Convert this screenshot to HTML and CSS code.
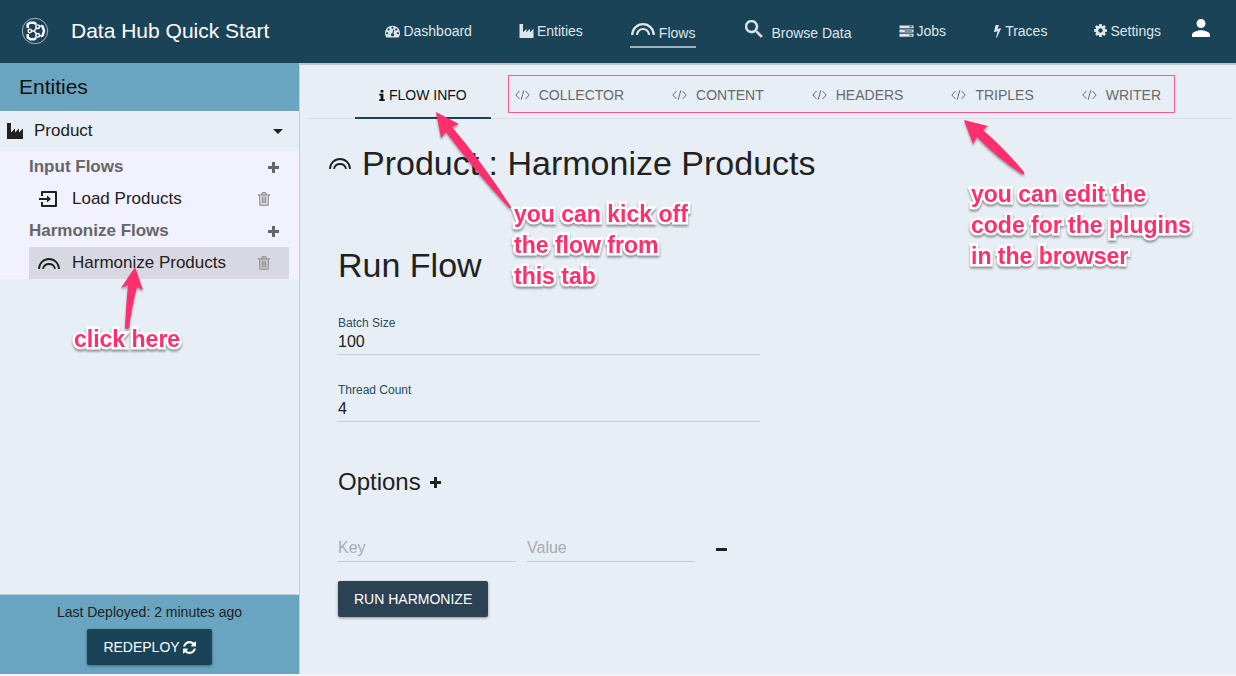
FILE: index.html
```html
<!DOCTYPE html>
<html lang="en">
<head>
<meta charset="utf-8">
<meta name="viewport" content="width=device-width, initial-scale=1">
<title>Data Hub Quick Start</title>
<link rel="stylesheet" href="styles.css">
</head>
<body>
<svg class="sprite" aria-hidden="true">
  <symbol id="i-dashboard" viewBox="0 128 1792 1536"><path d="M384 1152q0-53-37.500-90.500t-90.500-37.500-90.500 37.500-37.500 90.500 37.500 90.500 90.500 37.500 90.500-37.500 37.500-90.500zm192-448q0-53-37.500-90.500t-90.500-37.500-90.500 37.500-37.500 90.500 37.500 90.500 90.500 37.500 90.500-37.500 37.500-90.500zm428 481l101-382q6-26-7.500-48.500t-38.500-29.500-48 6.500-30 39.500l-101 382q-60 5-107 43.500t-63 98.500q-20 77 20 146t117 89 146-20 89-117q16-60-6-117t-72-91zm660-33q0-53-37.500-90.500t-90.500-37.500-90.500 37.500-37.500 90.500 37.500 90.500 90.500 37.500 90.500-37.500 37.500-90.500zm-640-640q0-53-37.500-90.500t-90.500-37.500-90.500 37.500-37.500 90.500 37.500 90.500 90.500 37.500 90.500-37.500 37.500-90.500zm448 192q0-53-37.500-90.500t-90.500-37.500-90.500 37.500-37.500 90.500 37.500 90.500 90.500 37.500 90.500-37.500 37.500-90.500zm320 448q0 261-141 483-19 29-54 29h-1402q-35 0-54-29-141-221-141-483 0-182 71-348t191-286 286-191 348-71 348 71 286 191 191 286 71 348z"/></symbol>
  <symbol id="i-factory" viewBox="0 0 16 16"><path d="M0 0h4v9.500l4-4v4l4-4v4l4-4V16H0z"/></symbol>
  <symbol id="i-rainbow" viewBox="0 0 24 12"><path d="M1.200 12A10.800 10.800 0 0 1 22.800 12M6 12a6 6 0 0 1 12 0" fill="none" stroke="currentColor" stroke-width="2.200"/></symbol>
  <symbol id="i-rainbow-thin" viewBox="0 0 22 12"><path d="M1 12a10 10 0 0 1 20 0M5 12a6.100 6.100 0 0 1 12 0" fill="none" stroke="currentColor" stroke-width="1.800"/></symbol>
  <symbol id="i-search" viewBox="3 3 18 18"><path stroke="currentColor" stroke-width=".6" d="M15.500 14h-.79l-.28-.27A6.470 6.470 0 0 0 16 9.500 6.500 6.500 0 1 0 9.500 16c1.610 0 3.090-.59 4.230-1.570l.27.28v.79l5 4.990L20.490 19l-4.990-5zm-6 0C7.010 14 5 11.990 5 9.500S7.010 5 9.500 5 14 7.010 14 9.500 11.990 14 9.500 14z"/></symbol>
  <symbol id="i-server" viewBox="0 0 16 12"><path fill-rule="evenodd" d="M.5 0h15v3H.5zM11 1v1h3V1zM.5 4.500h15v3H.5zM6 5.500v1h8v-1zM.5 9h15v3H.5zM11 10v1h3v-1z"/></symbol>
  <symbol id="i-bolt" viewBox="448 0 896 1792"><path d="M1333 566q18 20 7 44l-540 1157q-13 25-42 25-4 0-14-2-17-5-25.500-19t-4.500-30l197-808-406 101q-4 1-12 1-18 0-31-11-18-15-13-39l201-825q4-14 16-23t28-9h328q19 0 32 12.500t13 29.500q0 8-5 18l-171 463 396-98q8-2 12-2 19 0 34 15z"/></symbol>
  <symbol id="i-cog" viewBox="128 128 1536 1536"><path d="M1152 896q0-106-75-181t-181-75-181 75-75 181 75 181 181 75 181-75 75-181zm512-109v222q0 12-8 23t-20 13l-185 28q-19 54-39 91 35 50 107 138 10 12 10 25t-9 23q-27 37-99 108t-94 71q-12 0-26-9l-138-108q-44 23-91 38-16 136-29 186-7 28-36 28h-222q-14 0-24.500-8.500t-11.500-21.500l-28-184q-49-16-90-37l-141 107q-10 9-25 9-14 0-25-11-126-114-165-168-7-10-7-23 0-12 8-23 15-21 51-66.500t54-70.500q-27-50-41-99l-183-27q-13-2-21-12.500t-8-23.500v-222q0-12 8-23t19-13l186-28q14-46 39-92-40-57-107-138-10-12-10-24 0-10 9-23 26-36 98.500-107.500t94.500-71.500q13 0 26 10l138 107q44-23 91-38 16-136 29-186 7-28 36-28h222q14 0 24.500 8.500t11.500 21.500l28 184q49 16 90 37l142-107q9-9 24-9 13 0 25 10 129 119 165 170 7 8 7 22 0 12-8 23-15 21-51 66.500t-54 70.500q26 50 41 98l183 28q13 2 21 12.500t8 23.500z"/></symbol>
  <symbol id="i-person" viewBox="4 4 16 16"><path d="M12 12c2.210 0 4-1.790 4-4s-1.790-4-4-4-4 1.790-4 4 1.790 4 4 4zm0 2c-2.670 0-8 1.340-8 4v2h16v-2c0-2.660-5.330-4-8-4z"/></symbol>
  <symbol id="i-input" viewBox="0 0 22 16"><path d="M4 5V1h14v14H4v-4M1 8h9" fill="none" stroke="currentColor" stroke-width="2" stroke-linejoin="round"/><path d="M9 4.500L13 8l-4 3.500z"/></symbol>
  <symbol id="i-plus" viewBox="0 0 11 11"><path d="M4 0h3v4h4v3H7v4H4V7H0V4h4z"/></symbol>
  <symbol id="i-minus" viewBox="0 0 11 11"><rect y="4" width="11" height="3" rx=".6"/></symbol>
  <symbol id="i-trash" viewBox="0 0 12 14"><path d="M0 3h12M3.800 3l.7-2.200h3L8.200 3M1.700 3v9.200q0 1 1 1h6.600q1 0 1-1V3M4.300 4.500v7M6 4.500v7M7.700 4.500v7" fill="none" stroke="currentColor" stroke-width="1.400"/></symbol>
  <symbol id="i-caret" viewBox="0 0 10 5"><path d="M0 0h10L5 5z"/></symbol>
  <symbol id="i-info" viewBox="0 0 6 12"><path d="M1.500 0h3v2.600h-3zM0 4h4.500v6H6v2H0v-2h1.500V6H0z"/></symbol>
  <symbol id="i-code" viewBox="0 0 15 10"><path d="M4.500 1L.8 5l3.700 4M10.500 1l3.700 4-3.700 4M8.800.3L6.200 9.700" fill="none" stroke="currentColor"/></symbol>
  <symbol id="i-refresh" viewBox="128 128 1536 1536"><path d="M1639 1056q0 5-1 7-64 268-268 434.500t-478 166.500q-146 0-282.500-55t-243.500-157l-129 129q-19 19-45 19t-45-19-19-45v-448q0-26 19-45t45-19h448q26 0 45 19t19 45-19 45l-137 137q71 66 161 102t187 36q134 0 250-65t186-179q11-17 53-117 8-23 30-23h192q13 0 22.500 9.500t9.500 22.500zm25-800v448q0 26-19 45t-45 19h-448q-26 0-45-19t-19-45 19-45l138-138q-148-137-349-137-134 0-250 65t-186 179q-11 17-53 117-8 23-30 23h-199q-13 0-22.500-9.500t-9.500-22.500v-7q65-268 270-434.500t480-166.500q146 0 284 55.500t245 156.500l130-129q19-19 45-19t45 19 19 45z"/></symbol>
</svg>

<div class="app">
  <header class="topbar">
    <svg class="logo" viewBox="0 0 28 28" aria-hidden="true">
      <circle cx="14" cy="14" r="12.700" stroke-width=".8" opacity=".75"/>
      <path stroke-width="2.500" stroke-linejoin="round" d="M6.700 11V7.300L9.200 5.700h4l2 1.600M19.500 8.600l2.200 1L23 14l-1.300 4.400-2.200 1M15.200 20.700l-2 1.600h-4l-2.500-2V17"/>
      <path stroke-width="1.500" d="M10.500 14H13M15.500 11.300L13 14l2.500 2.700"/>
      <circle cx="8.800" cy="14" r="1.700" stroke-width="1.400"/>
      <circle cx="16.700" cy="9.700" r="1.800" stroke-width="1.400"/>
      <circle cx="16.700" cy="18.300" r="1.800" stroke-width="1.400"/>
    </svg>
    <span class="brand">Data Hub Quick Start</span>
    <nav class="nav" aria-label="Main">
      <a class="nav-link" href="#"><svg class="ico-15"><use href="#i-dashboard"/></svg>Dashboard</a>
      <a class="nav-link" href="#"><svg class="ico-15"><use href="#i-factory"/></svg>Entities</a>
      <a class="nav-link nav-link--large nav-link--active" href="#" aria-current="page"><svg class="ico-arc"><use href="#i-rainbow"/></svg>Flows</a>
      <a class="nav-link nav-link--large" href="#"><svg class="ico-18"><use href="#i-search"/></svg>Browse Data</a>
      <a class="nav-link" href="#"><svg class="ico-15"><use href="#i-server"/></svg>Jobs</a>
      <a class="nav-link" href="#"><svg class="ico-bolt"><use href="#i-bolt"/></svg>Traces</a>
      <a class="nav-link" href="#"><svg class="ico-13"><use href="#i-cog"/></svg>Settings</a>
    </nav>
    <button class="icon-button user" type="button" aria-label="Account"><svg class="ico-18"><use href="#i-person"/></svg></button>
  </header>

  <aside class="sidebar">
    <h2 class="sidebar-title">Entities</h2>
    <button class="entity" type="button" aria-expanded="true"><svg class="ico-16"><use href="#i-factory"/></svg><span>Product</span><svg class="caret"><use href="#i-caret"/></svg></button>
    <div class="flows">
      <div class="flow-head"><h3>Input Flows</h3><button class="icon-button" type="button" aria-label="Add input flow"><svg class="ico-11"><use href="#i-plus"/></svg></button></div>
      <div class="flow"><a href="#"><svg class="ico-flow"><use href="#i-input"/></svg>Load Products</a><button class="icon-button trash" type="button" aria-label="Delete Load Products"><svg><use href="#i-trash"/></svg></button></div>
      <div class="flow-head"><h3>Harmonize Flows</h3><button class="icon-button" type="button" aria-label="Add harmonize flow"><svg class="ico-11"><use href="#i-plus"/></svg></button></div>
      <div class="flow flow--active"><a href="#"><svg class="ico-title"><use href="#i-rainbow-thin"/></svg>Harmonize Products</a><button class="icon-button trash" type="button" aria-label="Delete Harmonize Products"><svg><use href="#i-trash"/></svg></button></div>
    </div>
    <div class="deploy">
      <p>Last Deployed: 2 minutes ago</p>
      <button class="button" type="button">REDEPLOY <svg class="ico-13"><use href="#i-refresh"/></svg></button>
    </div>
  </aside>

  <main class="main">
    <nav class="tabs" aria-label="Flow sections">
      <a class="tab tab--active" href="#" aria-current="true"><svg class="ico-info"><use href="#i-info"/></svg>FLOW INFO</a>
      <div class="plugin-tabs">
        <a class="tab" href="#"><svg class="ico-code"><use href="#i-code"/></svg>COLLECTOR</a>
        <a class="tab" href="#"><svg class="ico-code"><use href="#i-code"/></svg>CONTENT</a>
        <a class="tab" href="#"><svg class="ico-code"><use href="#i-code"/></svg>HEADERS</a>
        <a class="tab" href="#"><svg class="ico-code"><use href="#i-code"/></svg>TRIPLES</a>
        <a class="tab" href="#"><svg class="ico-code"><use href="#i-code"/></svg>WRITER</a>
      </div>
    </nav>
    <h1 class="page-title"><svg class="ico-title"><use href="#i-rainbow-thin"/></svg>Product : Harmonize Products</h1>
    <form class="run">
      <h2 class="run-title">Run Flow</h2>
      <div class="field"><label for="batch">Batch Size</label><input id="batch" type="text" value="100"></div>
      <div class="field"><label for="threads">Thread Count</label><input id="threads" type="text" value="4"></div>
      <div class="options"><h3>Options</h3><button class="icon-button" type="button" aria-label="Add option"><svg class="ico-11"><use href="#i-plus"/></svg></button></div>
      <div class="pair">
        <input class="pair-key" type="text" placeholder="Key" aria-label="Key">
        <input class="pair-value" type="text" placeholder="Value" aria-label="Value">
        <button class="icon-button" type="button" aria-label="Remove option"><svg class="ico-11"><use href="#i-minus"/></svg></button>
      </div>
      <button class="button button--run" type="button">RUN HARMONIZE</button>
    </form>
  </main>

  <svg class="arrows" width="1236" height="676" aria-hidden="true">
    <path d="M135 267L143 290L137 287Q132 305 129 328Q127 330 125 328Q126 305 128 285L121 288Z"/>
    <path d="M436 112L459 124L452 127Q482 162 511 207Q512 209 509 208Q474 170 446 132L441 138Z"/>
    <path d="M964 120L988 126L983 130Q1004 148 1024 172Q1025 175 1022 174Q997 158 977 137L973 144Z"/>
  </svg>
  <p class="note note--click">click here</p>
  <p class="note note--kick">you can kick off<br>the flow from<br>this tab</p>
  <p class="note note--edit">you can edit the<br>code for the plugins<br>in the browser</p>
</div>
</body>
</html>
```
FILE: styles.css
```css
* { box-sizing: border-box; }

body {
  margin: 0;
  background: #f6f6f6;
  color: #212121;
  font: 14px/20px "Liberation Sans", Arial, sans-serif;
}

h1, h2, h3, p { margin: 0; font-weight: 400; }
a { color: inherit; text-decoration: none; }
svg { fill: currentColor; flex: none; }
button, input { font: inherit; color: inherit; }
.sprite { position: absolute; width: 0; height: 0; }

.app {
  position: relative;
  display: grid;
  grid-template: 63px 1fr / 300px 1fr;
  min-height: calc(100vh - 2px);
  background: #e7eef5;
}

.ico-11 { width: 11px; height: 11px; }
.ico-13 { width: 13px; height: 13px; }
.ico-15 { width: 15px; height: 14px; }
.ico-16 { width: 16px; height: 16px; }
.ico-18 { width: 18px; height: 18px; }
.ico-bolt { width: 9px; height: 14px; }
.ico-arc { width: 24px; height: 12px; }
.ico-info { width: 6px; height: 11px; }
.ico-code { width: 15px; height: 10px; }
.ico-flow { width: 22px; height: 16px; }
.ico-title { width: 22px; height: 12px; }

.icon-button {
  display: flex;
  padding: 0;
  border: 0;
  background: none;
  cursor: pointer;
}

/* Top bar */
.topbar {
  grid-column: 1 / -1;
  display: flex;
  align-items: center;
  padding: 0 26px 2px 21px;
  background: #1b4357;
  color: #fff;
}
.logo { width: 28px; height: 28px; margin-right: 22px; fill: none; stroke: #fff; }
.brand { font-size: 21px; line-height: 24px; }
.nav { display: flex; align-items: center; gap: 47px; margin-left: auto; color: #dfe5e9; }
.nav-link { display: flex; align-items: center; gap: 3px; }
.nav-link--large { gap: 8px; padding: 4px 0 0 2px; }
.nav-link--large svg { margin-bottom: 8px; }
.nav-link--active { padding: 9px 1px 3px; border-bottom: 2px solid #a3b3bb; gap: 4px; }
.user { margin-left: 31px; }
.user svg { margin-bottom: 6px; }

/* Sidebar */
.sidebar {
  display: flex;
  flex-direction: column;
  border-right: 1px solid #c8cdd3;
  font-size: 17px;
}
.sidebar-title {
  padding: 12px 19px;
  background: #69a4c0;
  color: #111;
  font-size: 21px;
  line-height: 24px;
}
.entity {
  display: flex;
  align-items: center;
  gap: 11px;
  height: 40px;
  padding: 0 16px 0 7px;
  border: 0;
  background: none;
  cursor: pointer;
}
.caret { width: 10px; height: 5px; margin-left: auto; }
.flows { padding: 0 10px 0 29px; background: #f2f1ff; }
.flow-head, .flow { display: flex; align-items: center; justify-content: space-between; height: 32px; }
.flow-head { padding-right: 10px; color: #666; }
.flow-head h3 { font-size: 17px; font-weight: 700; }
.flow { padding: 0 19px 0 9px; }
.flow--active { background: #d8d8e2; }
.flow a { display: flex; align-items: center; gap: 12px; }
.trash { color: #999; }
.trash svg { width: 12px; height: 14px; }

.deploy {
  display: flex;
  flex-direction: column;
  align-items: center;
  gap: 7px;
  margin-top: auto;
  padding: 7px 0 9px;
  border-top: 1px solid #c8cdd3;
  background: #69a4c0;
  font-size: 14px;
}
.button {
  display: flex;
  align-items: center;
  gap: 3px;
  height: 36px;
  padding: 0 16px;
  border: 0;
  border-radius: 2px;
  background: #1b4357;
  color: #fff;
  box-shadow: 0 1px 3px rgba(0, 0, 0, .4);
  cursor: pointer;
}

/* Main column */
.main { padding: 6px 4px 24px 8px; border-top: 2px solid #c0c6cc; }
.tabs {
  display: flex;
  justify-content: center;
  box-shadow: inset 0 -1px #dcdfe2;
}
.tab {
  display: flex;
  align-items: center;
  gap: 9px;
  height: 48px;
  padding: 0 24px;
  color: #666a6e;
}
.tab--active {
  gap: 4px;
  padding-top: 2px;
  border-bottom: 2px solid #1b4357;
  color: #111;
}
.plugin-tabs { position: relative; display: flex; }
.plugin-tabs::after {
  content: "";
  position: absolute;
  inset: 4px 10px 6px 17px;
  border: 1px solid #fb5a8b;
  pointer-events: none;
}
.page-title {
  display: flex;
  align-items: center;
  gap: 11px;
  padding: 24px 21px;
  font-size: 34px;
  line-height: 40px;
}
.run { max-width: 452px; padding: 38px 0 0 30px; }
.run-title { font-size: 34px; line-height: 40px; }
.field {
  display: flex;
  flex-direction: column;
  margin-top: 27px;
}
.field label { color: #2b4b60; font-size: 12px; line-height: 16px; }
.run-title + .field { margin-top: 30px; }
.run input {
  min-width: 0;
  height: 24px;
  padding: 0 0 2px;
  border: 0;
  border-bottom: 1px solid #c6ccd6;
  background: none;
  font-size: 16px;
  outline: 0;
}
.run input::placeholder { color: #a9acb0; opacity: 1; }
.options { display: flex; align-items: center; gap: 9px; margin-top: 44px; }
.options h3 { font-size: 24px; line-height: 32px; }
.pair { display: flex; align-items: center; margin-top: 38px; }
.run .pair input { height: 26px; }
.pair-key { flex: 178; margin-right: 11px; }
.pair-value { flex: 168; margin-right: 21px; }
.pair .icon-button { margin-right: 33px; }
.button--run { margin-top: 19px; background: #2b4254; }

/* Annotations over the page */
.arrows {
  position: absolute;
  top: 0;
  left: 0;
  fill: #ff2e6c;
  filter: drop-shadow(0 2px 1px rgba(0, 0, 0, .35));
  pointer-events: none;
}
.note {
  position: absolute;
  color: #ff2e6c;
  font-size: 23px;
  font-weight: 700;
  line-height: 31px;
  white-space: nowrap;
  -webkit-text-stroke: 5px #fff;
  paint-order: stroke fill;
  filter: drop-shadow(0 2px 1px rgba(0, 0, 0, .4));
}
.note--click { top: 324px; left: 74px; }
.note--kick { top: 199px; left: 514px; }
.note--edit { top: 179px; left: 971px; }
```
